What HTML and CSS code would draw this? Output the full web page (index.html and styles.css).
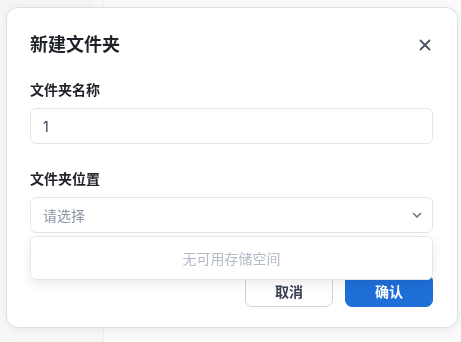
FILE: index.html
```html
<!DOCTYPE html>
<html lang="zh-CN">
<head>
    <meta charset="UTF-8">
    <meta name="viewport" content="width=device-width, initial-scale=1.0">
    <title>新建文件夹</title>
    <link rel="stylesheet" href="styles.css">
</head>
<body>
    <div class="page">
        <aside class="sidebar">
            <div class="sidebar-top"></div>
        </aside>
        <main class="content"></main>
    </div>

    <div class="overlay">
        <div class="modal">
            <div class="modal-header">
                <h2>新建文件夹</h2>
                <button class="close-btn" aria-label="关闭">
                    <svg width="12" height="12" viewBox="0 0 12 12">
                        <path d="M1.5 1.5 L10.5 10.5 M10.5 1.5 L1.5 10.5" stroke="#4b5563" stroke-width="1.8" stroke-linecap="round"/>
                    </svg>
                </button>
            </div>

            <div class="form-group">
                <label for="folderName">文件夹名称</label>
                <input type="text" id="folderName" value="1">
            </div>

            <div class="form-group">
                <label>文件夹位置</label>
                <div class="select-wrap">
                    <div class="select">
                        <span class="placeholder">请选择</span>
                        <svg width="12" height="12" viewBox="0 0 12 12">
                            <path d="M2.5 4.5 L6 8 L9.5 4.5" fill="none" stroke="#6b7280" stroke-width="1.6" stroke-linecap="round" stroke-linejoin="round"/>
                        </svg>
                    </div>
                    <div class="dropdown">无可用存储空间</div>
                </div>
            </div>

            <div class="modal-footer">
                <button class="btn btn-cancel">取消</button>
                <button class="btn btn-primary">确认</button>
            </div>
        </div>
    </div>
</body>
</html>
```

FILE: styles.css
```css
:root {
    --primary-color: #1f6fd9;
    --border-color: #e3e6ea;
    --text-color: #1f2329;
    --muted-color: #8b95a5;
}

* {
    box-sizing: border-box;
    margin: 0;
    padding: 0;
    font-family: Inter, 'Noto Sans CJK SC', sans-serif;
}

html, body {
    height: 100%;
}

body {
    background-color: #f6f6f7;
    color: var(--text-color);
    overflow: hidden;
}

.page {
    display: flex;
    height: 100%;
}

.sidebar {
    width: 104px;
    background-color: #f3f3f4;
    border-right: 1px solid #e6e6e8;
}

.sidebar-top {
    width: 93px;
    height: 16px;
    background-color: #efeff0;
}

.content {
    flex: 1;
    background-color: #f8f8f9;
}

.overlay {
    position: fixed;
    inset: 0;
    padding: 7px 3px 0 6px;
    background: rgba(255, 255, 255, 0.35);
}

.modal {
    width: 452px;
    background: white;
    border: 1px solid #dcdfe3;
    border-radius: 12px;
    box-shadow: 0 2px 10px rgba(0, 0, 0, 0.06);
    padding: 23px 24px 20px 23px;
}

.modal-header {
    display: flex;
    align-items: center;
    justify-content: space-between;
    margin-bottom: 21px;
}

.modal-header h2 {
    font-size: 18px;
    font-weight: 700;
    line-height: 28px;
    color: #1f2329;
}

.close-btn {
    width: 20px;
    height: 20px;
    border: none;
    background: none;
    display: flex;
    align-items: center;
    justify-content: center;
    margin-right: -2px;
    cursor: pointer;
}

.form-group {
    margin-bottom: 25px;
}

label {
    display: block;
    font-size: 14px;
    font-weight: 700;
    line-height: 20px;
    margin-bottom: 8px;
    color: #1f2329;
}

input {
    width: 100%;
    height: 36px;
    padding: 0 12px;
    border: 1px solid var(--border-color);
    border-radius: 6px;
    font-size: 14px;
    color: #374151;
    outline: none;
}

.select-wrap {
    position: relative;
}

.select {
    height: 36px;
    padding: 0 9px 0 12px;
    border: 1px solid var(--border-color);
    border-radius: 6px;
    display: flex;
    align-items: center;
    justify-content: space-between;
    font-size: 14px;
}

.placeholder {
    color: var(--muted-color);
}

.dropdown {
    position: absolute;
    top: 39px;
    left: 0;
    right: 0;
    height: 44px;
    background: white;
    border: 1px solid var(--border-color);
    border-radius: 6px;
    box-shadow: 0 4px 12px rgba(0, 0, 0, 0.08);
    display: flex;
    align-items: center;
    justify-content: center;
    font-size: 14px;
    color: #b3bac5;
    z-index: 2;
}

.modal-footer {
    display: flex;
    justify-content: flex-end;
    gap: 12px;
    margin-top: 41px;
}

.btn {
    width: 88px;
    height: 33px;
    border-radius: 7px;
    font-size: 14px;
    font-weight: 700;
    cursor: pointer;
}

.btn-cancel {
    background: white;
    border: 1px solid #cfd3d8;
    color: #374151;
}

.btn-primary {
    background-color: var(--primary-color);
    border: 1px solid var(--primary-color);
    color: white;
}
```
